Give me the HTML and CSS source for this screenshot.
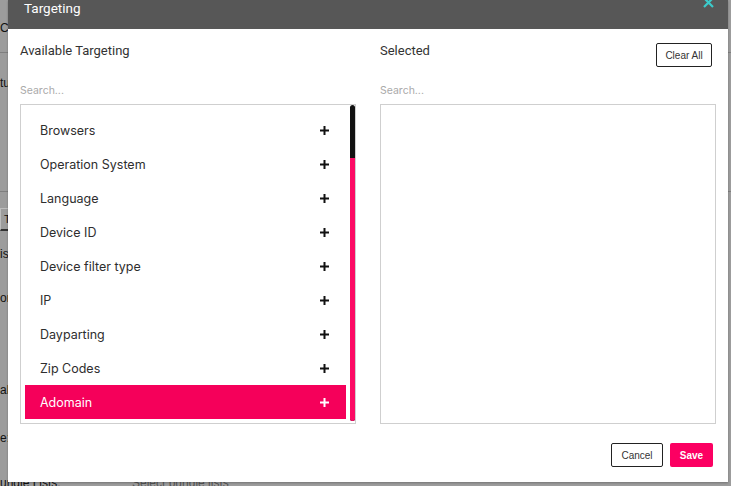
FILE: index.html
```html
<!DOCTYPE html>
<html>
<head>
<meta charset="utf-8">
<link rel="stylesheet" href="styles.css">
</head>
<body>
<div class="page">
  <div class="bg-row r1">Co</div>
  <div class="bg-hr h1"></div>
  <div class="bg-row r2">tus</div>
  <div class="bg-hr h2"></div>
  <div class="bg-tab">T</div>
  <div class="bg-row r3">is</div>
  <div class="bg-row r4">on</div>
  <div class="bg-row r5">al</div>
  <div class="bg-row r6">e:</div>
  <div class="bg-row r7"><span class="bg-label">undle Lists:</span><span class="bg-ph">Select bundle lists</span></div>

  <div class="modal">
    <div class="modal-head">
      <span class="modal-title">Targeting</span>
      <svg class="close" width="11" height="11" viewBox="0 0 11 11"><path d="M1 1L10 10M10 1L1 10" stroke="#3ccaca" stroke-width="2.2" fill="none"/></svg>
    </div>
    <div class="modal-body">
      <div class="cols">
        <div class="col">
          <div class="col-head"><span class="col-title">Available Targeting</span></div>
          <div class="search">Search...</div>
          <div class="box box-left">
            <div class="list">
              <div class="item"><span>Browsers</span><svg class="plus" width="9" height="9" viewBox="0 0 9 9"><path d="M4.5 0V9M0 4.5H9" stroke="currentColor" stroke-width="2"/></svg></div>
              <div class="item"><span>Operation System</span><svg class="plus" width="9" height="9" viewBox="0 0 9 9"><path d="M4.5 0V9M0 4.5H9" stroke="currentColor" stroke-width="2"/></svg></div>
              <div class="item"><span>Language</span><svg class="plus" width="9" height="9" viewBox="0 0 9 9"><path d="M4.5 0V9M0 4.5H9" stroke="currentColor" stroke-width="2"/></svg></div>
              <div class="item"><span>Device ID</span><svg class="plus" width="9" height="9" viewBox="0 0 9 9"><path d="M4.5 0V9M0 4.5H9" stroke="currentColor" stroke-width="2"/></svg></div>
              <div class="item"><span>Device filter type</span><svg class="plus" width="9" height="9" viewBox="0 0 9 9"><path d="M4.5 0V9M0 4.5H9" stroke="currentColor" stroke-width="2"/></svg></div>
              <div class="item"><span>IP</span><svg class="plus" width="9" height="9" viewBox="0 0 9 9"><path d="M4.5 0V9M0 4.5H9" stroke="currentColor" stroke-width="2"/></svg></div>
              <div class="item"><span>Dayparting</span><svg class="plus" width="9" height="9" viewBox="0 0 9 9"><path d="M4.5 0V9M0 4.5H9" stroke="currentColor" stroke-width="2"/></svg></div>
              <div class="item"><span>Zip Codes</span><svg class="plus" width="9" height="9" viewBox="0 0 9 9"><path d="M4.5 0V9M0 4.5H9" stroke="currentColor" stroke-width="2"/></svg></div>
              <div class="item active"><span>Adomain</span><svg class="plus" width="9" height="9" viewBox="0 0 9 9"><path d="M4.5 0V9M0 4.5H9" stroke="currentColor" stroke-width="2"/></svg></div>
            </div>
            <div class="scrollbar"><div class="thumb"></div></div>
          </div>
        </div>
        <div class="col">
          <div class="col-head"><span class="col-title">Selected</span><button class="btn btn-outline clear">Clear All</button></div>
          <div class="search">Search...</div>
          <div class="box"></div>
        </div>
      </div>
      <div class="footer">
        <button class="btn btn-outline cancel">Cancel</button>
        <button class="btn btn-primary save">Save</button>
      </div>
    </div>
  </div>
</div>
</body>
</html>
```
FILE: styles.css
```css
* { box-sizing: border-box; }
html, body { margin: 0; padding: 0; }
body { width: 731px; height: 486px; overflow: hidden; }

.page {
  position: relative;
  width: 731px;
  height: 486px;
  overflow: hidden;
  background: #9c9c9c;
  font-family: "Liberation Sans", Arial, sans-serif;
  font-size: 12px;
  color: #111;
  display: flex;
  flex-direction: column;
}
.bg-row { height: 14px; line-height: 14px; white-space: nowrap; flex: none; }
.bg-hr { height: 1px; background: #7f7f7f; flex: none; }
.r1 { margin-top: 21px; }
.h1 { margin-top: 17px; }
.r2 { margin-top: 23px; }
.h2 { margin-top: 101px; }
.bg-tab {
  margin-top: 16px; height: 23px; line-height: 20px; padding-left: 3px;
  border: 1px solid #bdbdbd; border-bottom: 2px solid #333; width: 40px; flex: none; font-size: 11px;
}
.r3 { margin-top: 16px; }
.r4 { margin-top: 30px; }
.r5 { margin-top: 78px; }
.r6 { margin-top: 34px; }
.r7 { margin-top: 31px; display: flex; }
.bg-label { width: 132px; }
.bg-ph { color: #555; }

.modal {
  position: absolute;
  left: 8px;
  top: 0;
  width: 720px;
  height: 482px;
  background: #fff;
  display: flex;
  flex-direction: column;
  box-shadow: 0 1px 2px rgba(0,0,0,0.25);
}
.modal-head {
  position: relative;
  height: 29px;
  background: #575757;
  flex: none;
}
.modal-title {
  display: block;
  padding-left: 16px;
  line-height: 17px;
  font-family: Roboto, "Liberation Sans", sans-serif;
  font-size: 13.5px;
  color: #fff;
}
.close { position: absolute; left: 695px; top: -3px; }

.modal-body {
  flex: 1;
  padding: 14px 12px 15px 12px;
  display: flex;
  flex-direction: column;
}
.cols { display: flex; gap: 24px; }
.col { width: 336px; display: flex; flex-direction: column; }
.col-head {
  height: 24px;
  display: flex;
  justify-content: space-between;
  align-items: flex-start;
}
.col-title {
  font-family: Roboto, "Liberation Sans", sans-serif;
  font-size: 13px;
  line-height: 16px;
  color: #333;
}
.search {
  margin-top: 17px;
  height: 14px;
  line-height: 14px;
  font-family: Inter, "Liberation Sans", sans-serif;
  font-size: 10.5px;
  color: #aaa;
}
.box {
  margin-top: 6px;
  height: 320px;
  border: 1px solid #cfcfcf;
}
.box-left {
  display: flex;
  padding-left: 4px;
}
.list {
  width: 321px;
  padding-top: 8px;
  flex: none;
}
.item {
  height: 34px;
  display: flex;
  align-items: center;
  justify-content: space-between;
  padding: 0 17px 0 15px;
  font-family: Inter, "Liberation Sans", sans-serif;
  font-size: 12.5px;
  color: #2e2e2e;
}
.item .plus { color: #111; }
.item.active { background: #f5005a; color: #fff; }
.item.active .plus { color: #fff; }
.scrollbar {
  margin-left: 4px;
  width: 5px;
  height: 316px;
  background: #111;
  border-radius: 3px;
  display: flex;
  flex-direction: column;
  justify-content: flex-end;
}
.thumb {
  height: 263px;
  background: #fc0a64;
  border-radius: 0 0 3px 3px;
}

.btn {
  font-family: "Liberation Sans", Arial, sans-serif;
  font-size: 10px;
  height: 24px;
  border-radius: 2px;
  padding: 0;
  cursor: pointer;
}
.btn-outline { background: #fff; border: 1px solid #222; color: #333; }
.btn-primary { background: #fc0062; border: none; color: #fff; font-weight: bold; }
.clear { width: 56px; margin-right: 4px; }
.footer {
  margin-top: 19px;
  display: flex;
  justify-content: flex-end;
  gap: 7px;
  padding-right: 3px;
}
.cancel { width: 52px; }
.save { width: 43px; }
```
